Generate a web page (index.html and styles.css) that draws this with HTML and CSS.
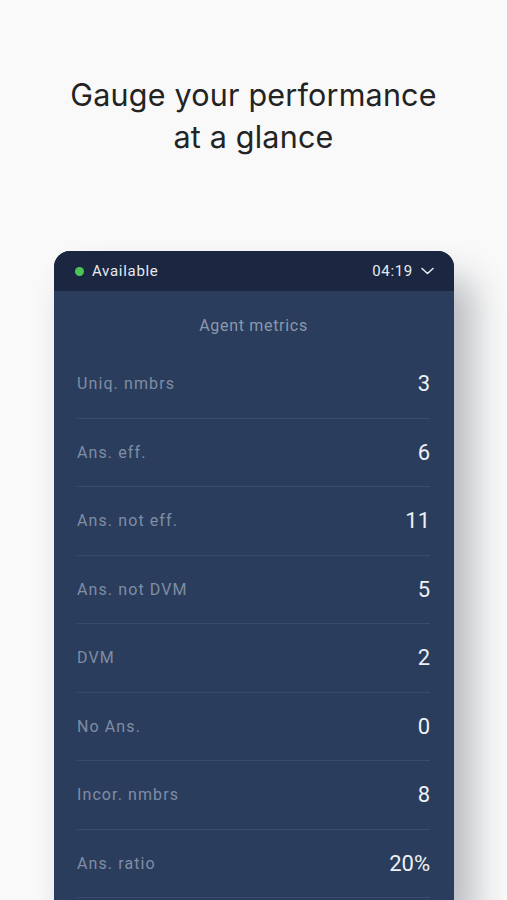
FILE: index.html
```html
<!DOCTYPE html>
<html>
<head>
<meta charset="utf-8">
<link rel="stylesheet" href="styles.css">
</head>
<body>
<div class="page">
  <h1 class="headline">Gauge your performance<br>at a glance</h1>
  <div class="card">
    <div class="card-head">
      <div class="status"><span class="dot"></span>Available</div>
      <div class="timer">04:19
        <svg class="chev" width="13" height="8" viewBox="0 0 13 8"><path d="M1 1.5 L6.5 6.5 L12 1.5" fill="none" stroke="#e6eaf0" stroke-width="1.6" stroke-linecap="round" stroke-linejoin="round"/></svg>
      </div>
    </div>
    <div class="card-body">
      <div class="title">Agent metrics</div>
      <div class="row"><span class="label">Uniq. nmbrs</span><span class="value">3</span></div>
      <div class="row"><span class="label">Ans. eff.</span><span class="value">6</span></div>
      <div class="row"><span class="label">Ans. not eff.</span><span class="value">11</span></div>
      <div class="row"><span class="label">Ans. not DVM</span><span class="value">5</span></div>
      <div class="row"><span class="label">DVM</span><span class="value">2</span></div>
      <div class="row"><span class="label">No Ans.</span><span class="value">0</span></div>
      <div class="row"><span class="label">Incor. nmbrs</span><span class="value">8</span></div>
      <div class="row"><span class="label">Ans. ratio</span><span class="value">20%</span></div>
    </div>
  </div>
</div>
</body>
</html>
```
FILE: styles.css
```css
html, body {
  margin: 0;
  padding: 0;
  background: #f9f9f9;
  overflow: hidden;
}
.page {
  width: 507px;
  height: 900px;
  overflow: hidden;
  display: flex;
  flex-direction: column;
  align-items: center;
}
.headline {
  margin: 74px 0 0 0;
  font-family: Inter, "Liberation Sans", sans-serif;
  font-weight: 400;
  font-size: 30.5px;
  line-height: 42px;
  color: #232323;
  text-align: center;
  letter-spacing: 0.2px;
}
.card {
  margin-top: 93px;
  width: 400px;
  margin-left: 1px;
  border-radius: 16px 16px 0 0;
  background: #2b3d5c;
  box-shadow: 18px 28px 36px rgba(20, 30, 50, 0.3);
  font-family: Roboto, "Liberation Sans", sans-serif;
  flex: 1 0 auto;
}
.card-head {
  height: 40px;
  background: #1b2640;
  border-radius: 16px 16px 0 0;
  display: flex;
  align-items: center;
  justify-content: space-between;
  padding: 0 20px 0 21px;
  color: #e6eaf0;
  font-size: 15px;
  letter-spacing: 0.7px;
}
.status {
  display: flex;
  align-items: center;
}
.dot {
  width: 9px;
  height: 9px;
  border-radius: 50%;
  background: #4cc455;
  margin-right: 8px;
}
.timer {
  display: flex;
  align-items: center;
  gap: 8px;
}
.chev { display: block; }
.card-body {
  padding: 0 24px 0 23px;
}
.title {
  text-align: center;
  color: #8a98ae;
  font-size: 16px;
  letter-spacing: 0.7px;
  padding: 25px 0 0 0;
  height: 34px;
}
.row {
  height: 68.5px;
  display: flex;
  align-items: center;
  justify-content: space-between;
  border-bottom: 1px solid #3a4c6a;
  box-sizing: border-box;
}
.label {
  color: #7f8da5;
  font-size: 16px;
  letter-spacing: 1.1px;
}
.value {
  color: #eef1f5;
  font-size: 22px;
}
```
